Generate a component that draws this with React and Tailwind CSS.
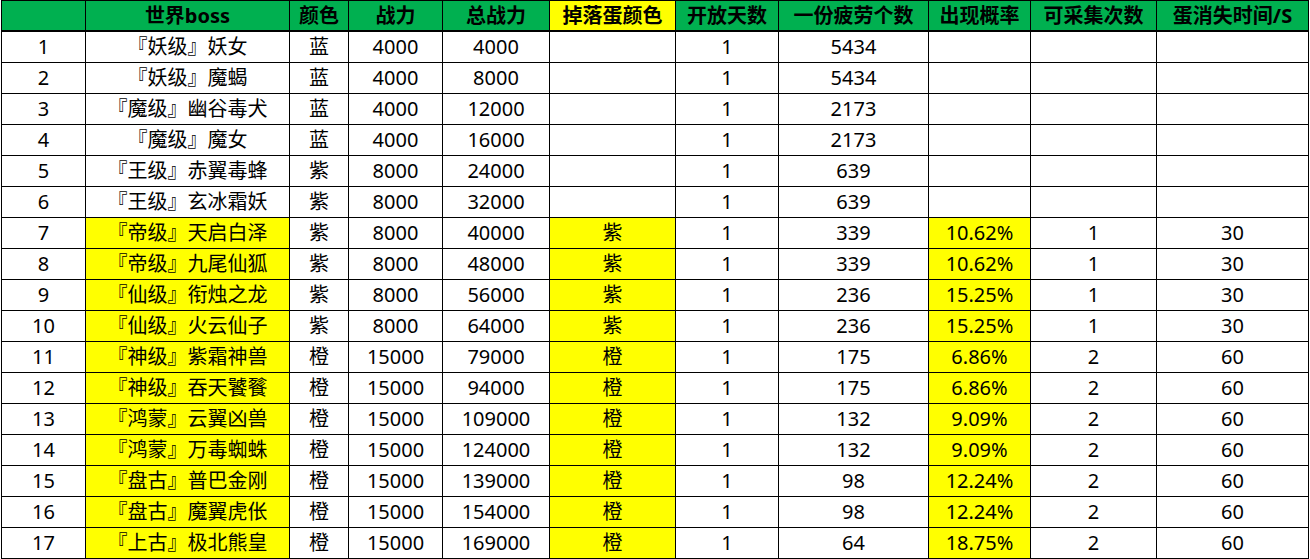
const headers = [
  "",
  "世界boss",
  "颜色",
  "战力",
  "总战力",
  "掉落蛋颜色",
  "开放天数",
  "一份疲劳个数",
  "出现概率",
  "可采集次数",
  "蛋消失时间/S",
];

const rows = [
  ["1", "『妖级』妖女", "蓝", "4000", "4000", "", "1", "5434", "", "", ""],
  ["2", "『妖级』魔蝎", "蓝", "4000", "8000", "", "1", "5434", "", "", ""],
  ["3", "『魔级』幽谷毒犬", "蓝", "4000", "12000", "", "1", "2173", "", "", ""],
  ["4", "『魔级』魔女", "蓝", "4000", "16000", "", "1", "2173", "", "", ""],
  ["5", "『王级』赤翼毒蜂", "紫", "8000", "24000", "", "1", "639", "", "", ""],
  ["6", "『王级』玄冰霜妖", "紫", "8000", "32000", "", "1", "639", "", "", ""],
  ["7", "『帝级』天启白泽", "紫", "8000", "40000", "紫", "1", "339", "10.62%", "1", "30"],
  ["8", "『帝级』九尾仙狐", "紫", "8000", "48000", "紫", "1", "339", "10.62%", "1", "30"],
  ["9", "『仙级』衔烛之龙", "紫", "8000", "56000", "紫", "1", "236", "15.25%", "1", "30"],
  ["10", "『仙级』火云仙子", "紫", "8000", "64000", "紫", "1", "236", "15.25%", "1", "30"],
  ["11", "『神级』紫霜神兽", "橙", "15000", "79000", "橙", "1", "175", "6.86%", "2", "60"],
  ["12", "『神级』吞天饕餮", "橙", "15000", "94000", "橙", "1", "175", "6.86%", "2", "60"],
  ["13", "『鸿蒙』云翼凶兽", "橙", "15000", "109000", "橙", "1", "132", "9.09%", "2", "60"],
  ["14", "『鸿蒙』万毒蜘蛛", "橙", "15000", "124000", "橙", "1", "132", "9.09%", "2", "60"],
  ["15", "『盘古』普巴金刚", "橙", "15000", "139000", "橙", "1", "98", "12.24%", "2", "60"],
  ["16", "『盘古』魔翼虎伥", "橙", "15000", "154000", "橙", "1", "98", "12.24%", "2", "60"],
  ["17", "『上古』极北熊皇", "橙", "15000", "169000", "橙", "1", "64", "18.75%", "2", "60"],
];

// columns that turn yellow once an egg colour is set
const highlightCols = [1, 5, 8];

function App() {
  return (
    <div
      className="min-h-screen bg-white text-black"
      style={{ fontFamily: '"Noto Sans", "Noto Sans CJK SC", sans-serif' }}
    >
      <div className="ml-px inline-grid grid-cols-[83px_203px_58px_93px_106px_125px_102px_149px_101px_125px_151px] auto-rows-[30px] gap-px bg-black p-px">
        {headers.map((h, i) => (
          <div
            key={"h" + i}
            className={
              "h-[29px] flex items-center justify-center text-[20px] font-bold leading-none whitespace-nowrap " +
              (i === 5 ? "bg-[#ffff00]" : "bg-[#00b050]")
            }
          >
            {h}
          </div>
        ))}
        {rows.map((r, ri) =>
          r.map((c, ci) => {
            const yellow = r[5] !== "" && highlightCols.includes(ci);
            return (
              <div
                key={ri + "-" + ci}
                className={
                  "flex items-center justify-center text-[20px] leading-none whitespace-nowrap " +
                  (yellow ? "bg-[#ffff00]" : "bg-white")
                }
              >
                {c}
              </div>
            );
          })
        )}
      </div>
    </div>
  );
}

export default App;
